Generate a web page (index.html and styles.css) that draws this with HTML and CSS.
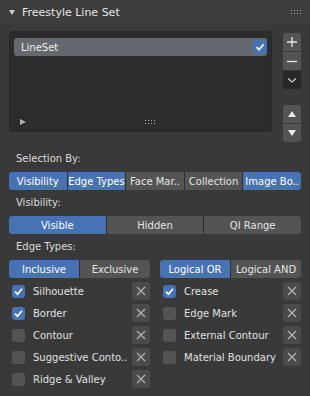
FILE: index.html
```html
<!DOCTYPE html>
<html lang="en">
<head>
  <meta charset="UTF-8">
  <title>Freestyle Line Set</title>
  <link rel="stylesheet" href="styles.css">
</head>
<body>

  <!-- Panel header -->
  <div class="panel-header">
    <svg class="caret" viewBox="0 0 6 5"><polygon points="0,0 6,0 3,5" fill="#cfcfcf"/></svg>
    <span class="title">Freestyle Line Set</span>
    <svg class="grip" viewBox="0 0 10 4">
      <rect x="0" y="0" width="1" height="1"/><rect x="3" y="0" width="1" height="1"/>
      <rect x="6" y="0" width="1" height="1"/><rect x="9" y="0" width="1" height="1"/>
      <rect x="0" y="3" width="1" height="1"/><rect x="3" y="3" width="1" height="1"/>
      <rect x="6" y="3" width="1" height="1"/><rect x="9" y="3" width="1" height="1"/>
    </svg>
  </div>

  <div class="panel-body">

    <!-- Line set list -->
    <div class="list-area">
      <div class="list-box">
        <div class="list-row">
          <span class="list-name">LineSet</span>
          <span class="check on">
            <svg viewBox="0 0 14 14"><path d="M3.5 7.2 L6 9.7 L10.7 4.3" fill="none" stroke="#fff" stroke-width="1.7"/></svg>
          </span>
        </div>
        <div class="list-spacer"></div>
        <div class="list-footer">
          <svg class="expand" viewBox="0 0 6 6"><polygon points="0,0 6,3 0,6" fill="#b0b0b0"/></svg>
          <svg class="list-grip" viewBox="0 0 10 4">
            <rect x="0" y="0" width="1" height="1"/><rect x="3" y="0" width="1" height="1"/>
            <rect x="6" y="0" width="1" height="1"/><rect x="9" y="0" width="1" height="1"/>
            <rect x="0" y="3" width="1" height="1"/><rect x="3" y="3" width="1" height="1"/>
            <rect x="6" y="3" width="1" height="1"/><rect x="9" y="3" width="1" height="1"/>
          </svg>
        </div>
      </div>

      <div class="list-side">
        <div class="btn-group">
          <div class="icon-btn">
            <svg viewBox="0 0 18 18"><path d="M9 4 V14 M4 9 H14" stroke="#e8e8e8" stroke-width="1.3"/></svg>
          </div>
          <div class="icon-btn">
            <svg viewBox="0 0 18 18"><path d="M4 9.5 H14" stroke="#e8e8e8" stroke-width="1.3"/></svg>
          </div>
          <div class="icon-btn dark">
            <svg viewBox="0 0 18 18"><path d="M5 7.5 L9 11 L13 7.5" fill="none" stroke="#d0d0d0" stroke-width="1.1"/></svg>
          </div>
        </div>
        <div class="btn-group arrows">
          <div class="icon-btn">
            <svg viewBox="0 0 18 18"><polygon points="5,12 13,12 9,6" fill="#e8e8e8"/></svg>
          </div>
          <div class="icon-btn">
            <svg viewBox="0 0 18 18"><polygon points="5,6 13,6 9,12" fill="#e8e8e8"/></svg>
          </div>
        </div>
      </div>
    </div>

    <div class="label">Selection By:</div>
    <div class="seg">
      <div class="seg-btn on">Visibility</div>
      <div class="seg-btn on">Edge Types</div>
      <div class="seg-btn">Face Mar..</div>
      <div class="seg-btn">Collection</div>
      <div class="seg-btn on">Image Bo..</div>
    </div>

    <div class="label">Visibility:</div>
    <div class="seg">
      <div class="seg-btn on">Visible</div>
      <div class="seg-btn">Hidden</div>
      <div class="seg-btn">QI Range</div>
    </div>

    <div class="label">Edge Types:</div>
    <div class="cols">
      <div class="seg">
        <div class="seg-btn on">Inclusive</div>
        <div class="seg-btn">Exclusive</div>
      </div>
      <div class="seg">
        <div class="seg-btn on">Logical OR</div>
        <div class="seg-btn">Logical AND</div>
      </div>

      <div class="opt">
        <span class="box on"><svg viewBox="0 0 13 13"><path d="M3 6.7 L5.5 9.2 L10 3.8" fill="none" stroke="#fff" stroke-width="1.7"/></svg></span>
        <span class="opt-name">Silhouette</span>
        <span class="x-btn"><svg viewBox="0 0 18 18"><path d="M5 5 L13 13 M13 5 L5 13" stroke="#b8b8b8" stroke-width="1.1"/></svg></span>
      </div>
      <div class="opt">
        <span class="box on"><svg viewBox="0 0 13 13"><path d="M3 6.7 L5.5 9.2 L10 3.8" fill="none" stroke="#fff" stroke-width="1.7"/></svg></span>
        <span class="opt-name">Crease</span>
        <span class="x-btn"><svg viewBox="0 0 18 18"><path d="M5 5 L13 13 M13 5 L5 13" stroke="#b8b8b8" stroke-width="1.1"/></svg></span>
      </div>

      <div class="opt">
        <span class="box on"><svg viewBox="0 0 13 13"><path d="M3 6.7 L5.5 9.2 L10 3.8" fill="none" stroke="#fff" stroke-width="1.7"/></svg></span>
        <span class="opt-name">Border</span>
        <span class="x-btn"><svg viewBox="0 0 18 18"><path d="M5 5 L13 13 M13 5 L5 13" stroke="#b8b8b8" stroke-width="1.1"/></svg></span>
      </div>
      <div class="opt">
        <span class="box"></span>
        <span class="opt-name">Edge Mark</span>
        <span class="x-btn"><svg viewBox="0 0 18 18"><path d="M5 5 L13 13 M13 5 L5 13" stroke="#b8b8b8" stroke-width="1.1"/></svg></span>
      </div>

      <div class="opt">
        <span class="box"></span>
        <span class="opt-name">Contour</span>
        <span class="x-btn"><svg viewBox="0 0 18 18"><path d="M5 5 L13 13 M13 5 L5 13" stroke="#b8b8b8" stroke-width="1.1"/></svg></span>
      </div>
      <div class="opt">
        <span class="box"></span>
        <span class="opt-name">External Contour</span>
        <span class="x-btn"><svg viewBox="0 0 18 18"><path d="M5 5 L13 13 M13 5 L5 13" stroke="#b8b8b8" stroke-width="1.1"/></svg></span>
      </div>

      <div class="opt">
        <span class="box"></span>
        <span class="opt-name">Suggestive Conto..</span>
        <span class="x-btn"><svg viewBox="0 0 18 18"><path d="M5 5 L13 13 M13 5 L5 13" stroke="#b8b8b8" stroke-width="1.1"/></svg></span>
      </div>
      <div class="opt">
        <span class="box"></span>
        <span class="opt-name">Material Boundary</span>
        <span class="x-btn"><svg viewBox="0 0 18 18"><path d="M5 5 L13 13 M13 5 L5 13" stroke="#b8b8b8" stroke-width="1.1"/></svg></span>
      </div>

      <div class="opt">
        <span class="box"></span>
        <span class="opt-name">Ridge &amp; Valley</span>
        <span class="x-btn"><svg viewBox="0 0 18 18"><path d="M5 5 L13 13 M13 5 L5 13" stroke="#b8b8b8" stroke-width="1.1"/></svg></span>
      </div>
    </div>

  </div>
</body>
</html>
```

FILE: styles.css
```css
* {
  box-sizing: border-box;
}

body {
  margin: 0;
  width: 310px;
  height: 396px;
  overflow: hidden;
  background-color: #393939;
  color: #e0e0e0;
  font-family: "DejaVu Sans", sans-serif;
  font-size: 10px;
}

svg {
  display: block;
}

.panel-header {
  height: 24px;
  background-color: #3d3d3d;
  display: flex;
  align-items: center;
  padding: 0 9px 0 9px;
}

.caret {
  width: 6px;
  height: 5px;
  margin-right: 7px;
}

.title {
  flex: 1;
  font-size: 11px;
  color: #e6e6e6;
}

.grip {
  width: 10px;
  height: 4px;
  fill: #a0a0a0;
}

.panel-body {
  padding: 7px 9px 0;
  display: flex;
  flex-direction: column;
  gap: 4px;
}

/* list */
.list-area {
  display: flex;
  gap: 11px;
  height: 111px;
  margin-bottom: 4px;
}

.list-box {
  width: 263px;
  height: 100px;
  background-color: #2c2c2c;
  border: 1px solid #272727;
  border-radius: 4px;
  padding: 6px 4px 3px;
  display: flex;
  flex-direction: column;
  box-shadow: 0 1px 0 #303030;
}

.list-row {
  height: 18px;
  background-color: #65686f;
  border-radius: 3px;
  display: flex;
  align-items: center;
  padding-left: 7px;
}

.list-name {
  flex: 1;
  color: #f0f0f0;
}

.check {
  width: 14px;
  height: 14px;
  border-radius: 3px;
  background-color: #545454;
}

.check.on {
  background-color: #4772b3;
}

.list-spacer {
  flex: 1;
}

.list-footer {
  height: 10px;
  display: flex;
  align-items: center;
}

.expand {
  width: 6px;
  height: 6px;
  margin-left: 6px;
}

.list-grip {
  width: 10px;
  height: 4px;
  margin-left: 119px;
  fill: #b0b0b0;
}

.list-side {
  width: 18px;
  display: flex;
  flex-direction: column;
  padding-top: 2px;
}

.btn-group {
  display: flex;
  flex-direction: column;
  gap: 1px;
}

.btn-group.arrows {
  margin-top: 16px;
}

.icon-btn {
  height: 18px;
  background-color: #545454;
}

.icon-btn.dark {
  background-color: #282828;
}

.btn-group .icon-btn:first-child {
  border-radius: 3px 3px 0 0;
}

.btn-group .icon-btn:last-child {
  border-radius: 0 0 3px 3px;
}

.icon-btn svg {
  width: 18px;
  height: 18px;
}

/* rows */
.label {
  height: 18px;
  line-height: 18px;
  padding-left: 7px;
  color: #dcdcdc;
}

.seg {
  display: flex;
  height: 18px;
  gap: 1px;
  background-color: #2e2e2e;
  border-radius: 3px;
  overflow: hidden;
}

.seg-btn {
  flex: 1;
  background-color: #545454;
  display: flex;
  align-items: center;
  justify-content: center;
  white-space: nowrap;
  overflow: hidden;
  color: #e5e5e5;
}

.seg-btn.on {
  background-color: #4772b3;
  color: #ffffff;
}

.cols {
  display: grid;
  grid-template-columns: 1fr 1fr;
  column-gap: 10px;
  row-gap: 4px;
}

.opt {
  display: flex;
  align-items: center;
  height: 18px;
}

.box {
  width: 13px;
  height: 13px;
  margin: 0 8px 0 3px;
  border-radius: 3px;
  background-color: #545454;
}

.box.on {
  background-color: #4772b3;
}

.opt-name {
  flex: 1;
  white-space: nowrap;
}

.x-btn {
  width: 18px;
  height: 18px;
  border-radius: 3px;
  background-color: #4b4b4b;
}
```
